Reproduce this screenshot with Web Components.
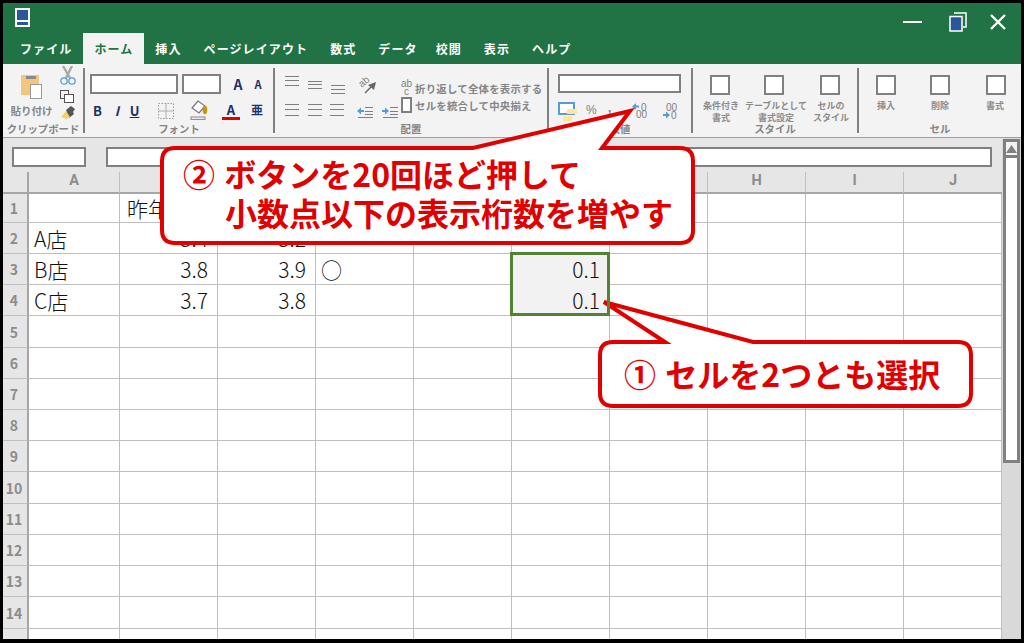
<!DOCTYPE html>
<html lang="ja">
<head>
<meta charset="utf-8">
<title>Excel</title>
<style>
html, body { margin: 0; padding: 0; background: #000; }
body { font-family: "Noto Sans CJK JP", "Noto Sans", sans-serif; }
</style>
</head>
<body>
<x-app>
  <x-callout x="162" y="148" w="531" h="95" base1="473" base2="602" tipx="630" tipy="111">
    <x-line>② ボタンを20回ほど押して</x-line>
    <x-line indent>小数点以下の表示桁数を増やす</x-line>
  </x-callout>
  <x-callout x="600" y="342" w="371" h="64" base1="665" base2="753" tipx="604" tipy="302" center>
    <x-line>① セルを2つとも選択</x-line>
  </x-callout>
</x-app>

<script>
const FONT = '"Noto Sans CJK JP", "Noto Sans", sans-serif';
const GRAY = '#808080';
const NAVY = '#1b2f6b';

// small helper so every element is written the same way
function define(name, html, extra) {
  class El extends HTMLElement {
    constructor() {
      super();
      this.attachShadow({ mode: "open" });
      this.shadowRoot.innerHTML = html;
      if (extra) extra.call(this, this.shadowRoot);
    }
  }
  customElements.define(name, El);
}

function lines(w, h, ys) {
  return `<svg width="${w}" height="${h}" viewBox="0 0 ${w} ${h}">` +
    ys.map(y => `<rect x="0" y="${y}" width="${w}" height="1" fill="#7f7f7f"/>`).join('') + `</svg>`;
}

define('x-app', `
<style>
:host { display: flex; flex-direction: column; width: 1024px; height: 643px; box-sizing: border-box;
  border: 3px solid #000; border-bottom-width: 4px; overflow: hidden; background: #e6e6e6; font-family: ${FONT}; }
.main { display: flex; flex: 1; min-height: 0; }
.left { display: flex; flex-direction: column; width: 999px; }
</style>
<x-titlebar></x-titlebar>
<x-tabs></x-tabs>
<x-ribbon></x-ribbon>
<div class="main">
  <div class="left">
    <x-formula></x-formula>
    <x-sheet></x-sheet>
  </div>
  <x-scrollbar></x-scrollbar>
</div>
<slot></slot>
`);

define('x-titlebar', `
<style>
:host { display: flex; align-items: flex-start; height: 30px; background: #217346; flex: none; }
.logo { margin: 5px 0 0 12px; }
.sp { flex: 1; }
.btns { display: flex; align-items: center; margin-top: 9px; }
svg { display: block; }
</style>
<svg class="logo" width="15" height="19" viewBox="0 0 15 19">
  <rect width="15" height="19" fill="#fff"/><rect x="2" y="2" width="11" height="10" fill="#2b579a"/><rect x="2" y="14" width="11" height="3" fill="#2b579a"/>
</svg>
<div class="sp"></div>
<div class="btns">
  <svg width="19" height="4" viewBox="0 0 19 4"><rect y="1" width="19" height="2" fill="#fff"/></svg>
  <svg style="margin-left:27px" width="18" height="20" viewBox="0 0 18 20">
    <path d="M5 1h12v14h-3" fill="none" stroke="#fff" stroke-width="1.5"/>
    <rect x="1" y="4.5" width="12" height="14.5" fill="#2b579a" stroke="#fff" stroke-width="1.5"/>
  </svg>
  <svg style="margin:0 15px 0 23px" width="16" height="16" viewBox="0 0 16 16"><path d="M1 1l14 14M15 1L1 15" stroke="#fff" stroke-width="2.4"/></svg>
</div>
`);

define('x-tab', `
<style>
:host { display: flex; align-items: center; justify-content: center; height: 31px; padding: 0 11px 0 11px;
  color: #fff; font-size: 12px; font-weight: 700; letter-spacing: 1.1px; white-space: nowrap; box-sizing: border-box; }
:host([active]) { background: #f3f3f3; color: #217346; }
</style>
<slot></slot>
`);

define('x-tabs', `
<style>
:host { display: flex; height: 31px; background: #217346; padding-left: 6px; flex: none; }
</style>
<x-tab>ファイル</x-tab><x-tab active>ホーム</x-tab><x-tab>挿入</x-tab><x-tab>ページレイアウト</x-tab><x-tab>数式</x-tab><x-tab>データ</x-tab><x-tab style="padding:0 11px 0 7px">校閲</x-tab><x-tab>表示</x-tab><x-tab>ヘルプ</x-tab>
`);

define('x-ribbon', `
<style>
:host { display: flex; height: 74px; background: #f3f3f3; border-bottom: 1px solid #a0a0a0; box-sizing: border-box; flex: none; }
.sep { width: 2px; margin: 4px 0 4px; background: ${GRAY}; flex: none; }
</style>
<x-clip-group></x-clip-group><div class="sep"></div>
<x-font-group></x-font-group><div class="sep"></div>
<x-align-group></x-align-group><div class="sep"></div>
<x-number-group></x-number-group><div class="sep"></div>
<x-style-group></x-style-group><div class="sep"></div>
<x-cell-group></x-cell-group>
`);

define('x-group', `
<style>
:host { display: grid; grid-template-rows: 58px 15px; flex: none; min-width: 0; }
.label { text-align: center; font-size: 10.4px; line-height: 13px; font-weight: 700; color: #858585; white-space: nowrap; }
.body { min-width: 0; }
</style>
<div class="body"><slot></slot></div>
<div class="label"></div>
`, function (root) { root.querySelector('.label').textContent = this.getAttribute('label'); });

define('x-clip-group', `
<style>
:host { display: block; width: 80px; flex: none; }
x-group { width: 80px; }
.wrap { display: flex; height: 58px; }
.paste { width: 56px; display: flex; flex-direction: column; align-items: center; padding: 11px 0 0 1px; box-sizing: border-box; }
.paste span { font-size: 10.5px; font-weight: 700; color: #858585; line-height: 14px; margin-top: 5px; white-space: nowrap; }
.small { display: flex; flex-direction: column; padding-top: 2px; margin-left: 1px; }
svg { display: block; }
</style>
<x-group label="クリップボード">
  <div class="wrap">
    <div class="paste">
      <svg width="21" height="24" viewBox="0 0 21 24">
        <rect x="0" y="0" width="18" height="20" fill="#f0c77d"/>
        <rect x="5" y="1" width="10" height="3" fill="#8a8a8a"/>
        <rect x="9.5" y="9.5" width="11" height="14" fill="#fff" stroke="#9a9a9a"/>
      </svg>
      <span>貼り付け</span>
    </div>
    <div class="small">
      <svg width="16" height="20" viewBox="0 0 16 20">
        <path d="M3 0l7 12M12 0L6 12" stroke="#a8a8a8" stroke-width="2.4"/>
        <circle cx="4" cy="15" r="3.2" fill="none" stroke="#5b9bd5" stroke-width="1.3"/>
        <circle cx="12" cy="15" r="3.2" fill="none" stroke="#5b9bd5" stroke-width="1.3"/>
      </svg>
      <svg style="margin-top:4px" width="14" height="13" viewBox="0 0 14 13">
        <rect x=".5" y=".5" width="8" height="8" fill="#f3f3f3" stroke="#555"/>
        <rect x="4.5" y="4.5" width="9" height="8" fill="#fff" stroke="#555"/>
      </svg>
      <svg style="margin-top:2px" width="16" height="15" viewBox="0 0 16 15">
        <path d="M6 5l5-4 4 3-2 3 1 2-5 4z" fill="#555"/>
        <path d="M1 12l5-6 4 6-3 2z" fill="#f5d25f"/>
      </svg>
    </div>
  </div>
</x-group>
`);

define('x-font-group', `
<style>
:host { display: block; width: 188px; flex: none; }
x-group { width: 188px; }
.wrap { padding: 10px 0 0 5px; }
.r { display: flex; align-items: center; }
.box { height: 20px; box-sizing: border-box; border: 2px solid ${GRAY}; background: #fff; flex: none; }
.t { color: ${NAVY}; font-weight: 700; text-align: center; line-height: 20px; flex: none; }
.r2 { margin-top: 7px; height: 20px; }
svg { display: block; flex: none; }
</style>
<x-group label="フォント">
  <div class="wrap">
    <div class="r">
      <div class="box" style="width:88px"></div>
      <div class="box" style="width:39px;margin-left:4px"></div>
      <div class="t" style="width:14px;margin-left:10px;font-size:14px">A</div>
      <div class="t" style="width:14px;margin-left:6px;font-size:11px">A</div>
    </div>
    <div class="r r2">
      <div class="t" style="width:15px;font-size:13px">B</div>
      <div class="t" style="width:20px;margin-left:2px;font-size:13px;font-style:italic">I</div>
      <div class="t" style="width:15px;font-size:13px;text-decoration:underline">U</div>
      <svg style="margin-left:16px" width="16" height="16" viewBox="0 0 16 16">
        <rect x=".5" y=".5" width="15" height="15" fill="none" stroke="#9a9a9a" stroke-dasharray="1.5 1.5"/>
        <path d="M8 0v16M0 8h16" stroke="#b0b0b0"/>
      </svg>
      <svg style="margin:-3px 0 0 16px" width="18" height="20" viewBox="0 0 18 20">
        <path d="M2 8l6-7 7 5-6 7z" fill="#fff" stroke="#777" stroke-width="1.2"/>
        <ellipse cx="15" cy="10" rx="2.3" ry="4.2" fill="#c9960c"/>
        <rect x="1" y="17" width="14" height="2.4" fill="#f3f3f3" stroke="#888"/>
      </svg>
      <div style="margin-left:14px;width:18px;flex:none">
        <div class="t" style="font-size:13px;line-height:15px">A</div>
        <div style="height:3px;background:#e00000"></div>
      </div>
      <div class="t" style="width:14px;margin-left:10px;font-size:12px;margin-top:-3px">亜</div>
    </div>
  </div>
</x-group>
`);

function indentIcon(flip) {
  const arrow = flip
    ? '<path d="M0 6h3V3.5L7 7l-4 3.5V8H0z" fill="#5b9bd5"/>'
    : '<path d="M7 6H4V3.5L0 7l4 3.5V8h3z" fill="#5b9bd5"/>';
  return `<svg width="16" height="14" viewBox="0 0 16 14">${arrow}
    <path d="M8 3.5h8M8 7.5h8M8 10.5h8M1 13.5h15" stroke="#7f7f7f"/></svg>`;
}

define('x-align-group', `
<style>
:host { display: block; width: 272px; flex: none; }
x-group { width: 272px; }
.wrap { display: flex; height: 58px; }
.icons { width: 126px; padding: 11px 0 0 10px; box-sizing: border-box; flex: none; }
.r { display: flex; }
.r2 { margin-top: 9px; }
.right { flex: none; padding-top: 16px; }
.w { display: flex; align-items: center; height: 16px; }
.w2 { margin-top: 1px; }
.w span { font-size: 10.4px; font-weight: 700; color: #858585; white-space: nowrap; letter-spacing: .25px; margin-left: 3px; }
.abc { width: 11px; height: 16px; font-size: 10px; line-height: 7.5px; color: #7f7f7f; text-align: center; font-family: "Liberation Sans", sans-serif; }
.merge { width: 11px; height: 16px; box-sizing: border-box; border: 2px solid #7f7f7f; background: #fff; }
svg { display: block; flex: none; overflow: visible; }
</style>
<x-group label="配置">
  <div class="wrap">
    <div class="icons">
      <div class="r">
        ${lines(14, 20, [1, 5, 10])}
        <div style="width:9px"></div>${lines(14, 20, [6, 9, 13])}
        <div style="width:9px"></div>${lines(14, 20, [10, 14, 18])}
        <svg style="margin-left:13px" width="19" height="20" viewBox="0 0 19 20">
          <text x="1" y="11" transform="rotate(-40 5 8)" font-family="Liberation Sans" font-size="10" fill="#7f7f7f">ab</text>
          <path d="M7 18L14 11" stroke="#666" stroke-width="1.4"/><path d="M18 7l-2 8-6-5z" fill="#666"/>
        </svg>
      </div>
      <div class="r r2">
        ${lines(14, 14, [0, 5, 11])}
        <div style="width:9px"></div>${lines(14, 14, [0, 5, 11])}
        <div style="width:8px"></div>${lines(14, 14, [0, 5, 11])}
        <div style="width:13px"></div>${indentIcon(false)}
        <div style="width:9px"></div>${indentIcon(true)}
      </div>
    </div>
    <div class="right">
      <div class="w"><div class="abc">ab<br>c</div><span>折り返して全体を表示する</span></div>
      <div class="w w2"><div class="merge"></div><span>セルを統合して中央揃え</span></div>
    </div>
  </div>
</x-group>
`);

define('x-number-group', `
<style>
:host { display: block; width: 142px; flex: none; }
x-group { width: 142px; }
.wrap { padding: 10px 0 0 9px; }
.box { width: 123px; height: 19px; box-sizing: border-box; border: 2px solid ${GRAY}; background: #fff; }
.r { display: flex; margin-top: 9px; align-items: flex-start; color: #7f7f7f; font-family: "Liberation Sans", sans-serif; }
.pct { font-size: 12px; line-height: 16px; margin-left: 8px; width: 12px; }
.comma { font-size: 12px; line-height: 12px; margin-left: 10px; width: 10px; font-weight: 700; }
svg { display: block; flex: none; }
</style>
<x-group label="数値">
  <div class="wrap">
    <div class="box"></div>
    <div class="r">
      <svg width="20" height="20" viewBox="0 0 20 20">
        <rect x="1" y="1" width="15" height="11" fill="#fff" stroke="#5b9bd5" stroke-width="2"/>
        <rect x="9" y="7" width="10" height="5" fill="#ffe699"/>
        <rect x="5" y="14" width="9" height="5" fill="#ffe699"/>
      </svg>
      <div class="pct">%</div>
      <div class="comma">,</div>
      <svg style="margin-left:14px" width="16" height="20" viewBox="0 0 16 20">
        <path d="M7 3.5H4V1L0 4.5 4 8V5.5h3z" fill="#5b9bd5"/>
        <text x="9" y="8.5" font-family="Liberation Sans" font-size="10" fill="#7f7f7f">0</text>
        <text x="4" y="16" font-family="Liberation Sans" font-size="10" fill="#7f7f7f">00</text>
      </svg>
      <svg style="margin-left:15px" width="16" height="20" viewBox="0 0 16 20">
        <text x="3" y="8.5" font-family="Liberation Sans" font-size="10" fill="#7f7f7f">00</text>
        <path d="M0 12h3V9.5L7 13l-4 3.5V14H0z" fill="#5b9bd5"/>
        <text x="8" y="16.5" font-family="Liberation Sans" font-size="10" fill="#7f7f7f">0</text>
      </svg>
    </div>
  </div>
</x-group>
`);

define('x-cmd', `
<style>
:host { display: flex; flex-direction: column; align-items: center; padding-top: 11px; min-width: 0; }
.sq { width: 20px; height: 20px; box-sizing: border-box; border: 2px solid ${GRAY}; background: #fff; flex: none; margin-left: var(--dx, 0px); }
.t { margin-top: 5px; font-size: 9px; line-height: 11.5px; font-weight: 700; color: #8c8c8c; text-align: center; white-space: nowrap; }
</style>
<div class="sq"></div>
<div class="t"><slot></slot></div>
`);

define('x-style-group', `
<style>
:host { display: block; width: 164px; flex: none; }
x-group { width: 164px; }
.wrap { display: grid; grid-template-columns: 56px 54px 56px; height: 58px; }
</style>
<x-group label="スタイル">
  <div class="wrap">
    <x-cmd style="--dx:-2px">条件付き<br>書式</x-cmd>
    <x-cmd style="--dx:-4px">テーブルとして<br>書式設定</x-cmd>
    <x-cmd style="--dx:-2px">セルの<br>スタイル</x-cmd>
  </div>
</x-group>
`);

define('x-cell-group', `
<style>
:host { display: block; width: 162px; flex: none; }
x-group { width: 162px; }
.wrap { display: grid; grid-template-columns: 54px 54px 56px; height: 58px; }
</style>
<x-group label="セル">
  <div class="wrap">
    <x-cmd>挿入</x-cmd>
    <x-cmd>削除</x-cmd>
    <x-cmd style="--dx:2px">書式</x-cmd>
  </div>
</x-group>
`);

define('x-formula', `
<style>
:host { display: flex; height: 34px; padding: 9px 10px 0 9px; box-sizing: border-box; gap: 20px; background: #e6e6e6; flex: none; }
div { height: 20px; box-sizing: border-box; border: 2px solid ${GRAY}; background: #fff; }
.name { width: 74px; flex: none; }
.bar { flex: 1; }
</style>
<div class="name"></div><div class="bar"></div>
`);

define('x-scrollbar', `
<style>
:host { display: flex; flex-direction: column; width: 19px; background: #d9d9d9; padding-top: 1px; box-sizing: border-box; flex: none; }
.up { height: 19px; box-sizing: border-box; border: 3px solid ${GRAY}; background: #f3f3f3; margin: 0 1px; display: flex; align-items: center; justify-content: center; }
.thumb { height: 305px; box-sizing: border-box; border: 3px solid ${GRAY}; border-top: 0; background: #fff; margin: 0 1px; }
svg { display: block; }
</style>
<div class="up"><svg width="11" height="8" viewBox="0 0 11 8"><path d="M5.5 0L11 8H0z" fill="${GRAY}"/></svg></div>
<div class="thumb"></div>
`);

const rowHeights = [29, 31, 31, 31, 32, 31, 31, 31, 31, 32, 31, 31, 31, 32, 12];
const cols = ['A', 'B', 'C', 'D', 'E', 'F', 'G', 'H', 'I', 'J'];
const data = {
  '1B': ['昨年', 'l i'],
  '2A': ['A店', 'l'], '2B': ['3.4', 'r'], '2C': ['3.2', 'r'],
  '3A': ['B店', 'l'], '3B': ['3.8', 'r'], '3C': ['3.9', 'r'], '3D': ['○', 'l'], '3F': ['0.1', 'r'],
  '4A': ['C店', 'l'], '4B': ['3.7', 'r'], '4C': ['3.8', 'r'], '4F': ['0.1', 'r']
};

define('x-sheet', `
<style>
:host { display: block; flex: 1; min-height: 0; overflow: hidden; background: #fff; }
.grid { display: grid; grid-template-columns: 26px 91px repeat(9, 98px); font-family: ${FONT}; }
.corner { background: #e6e6e6; border-right: 2px solid #a6a6a6; border-bottom: 2px solid #a6a6a6; box-sizing: border-box; }
.ch { box-sizing: border-box; background: #e6e6e6; border-bottom: 2px solid #a6a6a6; border-right: 1px solid #bfbfbf; color: #8c8c8c; font-family: Roboto, sans-serif; font-weight: 700; font-size: 14.5px; line-height: 18px; text-align: center; }
.ch.last { border-right: 0; }
.rh { background: #e6e6e6; border-right: 2px solid #a6a6a6; border-bottom: 1px solid #bfbfbf; box-sizing: border-box; color: #8c8c8c; font-weight: 700; font-size: 14px;
  display: flex; align-items: center; justify-content: center; padding-right: 2px; overflow: hidden; }
.c { border-right: 1px solid #bfbfbf; border-bottom: 1px solid #bfbfbf; box-sizing: border-box; font-size: 21px; font-weight: 300; color: #111; display: flex; align-items: center; padding: 0 9px 1px 5px; white-space: nowrap; overflow: hidden; }
.c.r { justify-content: flex-end; }
.c.i { padding-left: 7px; }
.c.sel { background: #f2f2f2; }
.c.noline { border-bottom-color: #f2f2f2; }
.selection { grid-column: 7; grid-row: 4 / span 2; border: 3px solid #548235; box-sizing: border-box; margin: -2px 0 0 -2px; z-index: 1; }
</style>
<div class="grid"></div>
`, function (root) {
  const grid = root.querySelector('.grid');
  grid.style.gridTemplateRows = '22px ' + rowHeights.map(h => h + 'px').join(' ');
  let html = '<div class="corner" style="grid-area:1/1"></div>';
  cols.forEach((c, i) => { html += `<div class="ch${i === 9 ? ' last' : ''}" style="grid-area:1/${i + 2}">${c}</div>`; });
  rowHeights.forEach((h, r) => {
    const n = r + 1;
    html += `<div class="rh" style="grid-area:${n + 1}/1">${n < 15 ? n : ''}</div>`;
    cols.forEach((c, i) => {
      const d = data[n + c];
      const sel = c === 'F' && (n === 3 || n === 4);
      const cls = ['c'];
      if (d) cls.push(d[1]);
      if (sel) cls.push('sel');
      if (sel && n === 3) cls.push('noline');
      html += `<div class="${cls.join(' ')}" style="grid-area:${n + 1}/${i + 2}">${d ? d[0] : ''}</div>`;
    });
  });
  html += '<div class="selection"></div>';
  grid.innerHTML = html;
});

define('x-line', `
<style>
:host { display: block; white-space: nowrap; word-spacing: 2px; }
:host([indent]) { padding-left: 42px; }
</style>
<slot></slot>
`);

// callout sits over the sheet, position comes from its attributes
class XCallout extends HTMLElement {
  constructor() {
    super();
    this.attachShadow({ mode: "open" });
  }
  connectedCallback() {
    const n = k => Number(this.getAttribute(k));
    const x = n('x'), y = n('y'), w = n('w'), h = n('h'), r = 13;
    const d = `M${x + r} ${y}H${n('base1')}L${n('tipx')} ${n('tipy')}L${n('base2')} ${y}H${x + w - r}` +
      `Q${x + w} ${y} ${x + w} ${y + r}V${y + h - r}Q${x + w} ${y + h} ${x + w - r} ${y + h}` +
      `H${x + r}Q${x} ${y + h} ${x} ${y + h - r}V${y + r}Q${x} ${y} ${x + r} ${y}Z`;
    this.shadowRoot.innerHTML = `
<style>
:host { position: absolute; left: 0; top: 0; width: 1024px; height: 643px; pointer-events: none; font-family: ${FONT}; }
svg { position: absolute; left: 0; top: 0; }
.text { position: absolute; left: ${x}px; top: ${y}px; width: ${w}px; height: ${h}px; box-sizing: border-box; padding: 0 0 5px 21px;
  display: flex; flex-direction: column; justify-content: center; color: #e00000; font-size: 32px; line-height: 39px; font-weight: 700; }
:host([center]) .text { padding: 0 0 2px 24px; }
</style>
<svg width="1024" height="643" viewBox="0 0 1024 643"><path d="${d}" fill="#fff" stroke="#e00000" stroke-width="4" stroke-linejoin="miter"/></svg>
<div class="text"><slot></slot></div>`;
  }
}
customElements.define('x-callout', XCallout);
</script>
</body>
</html>
